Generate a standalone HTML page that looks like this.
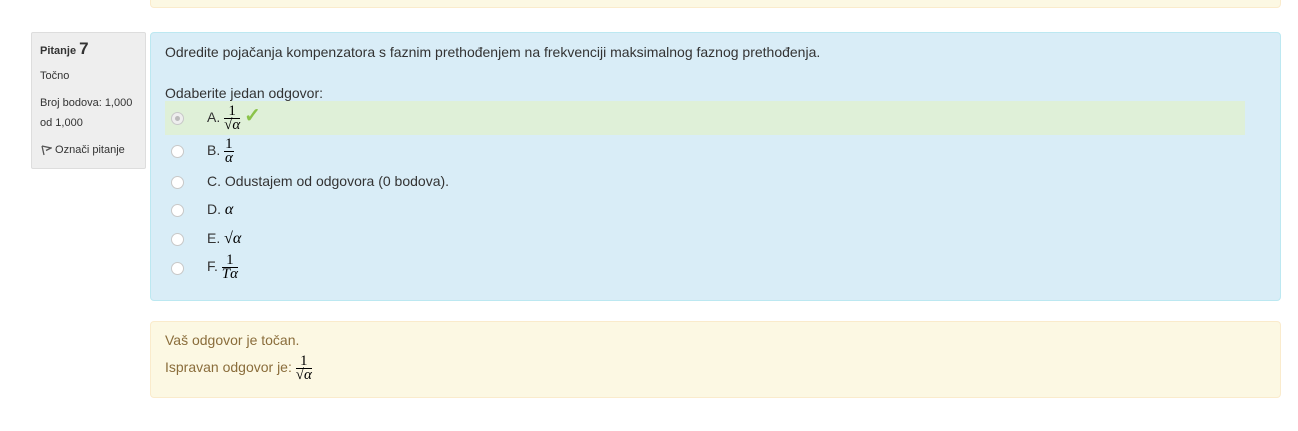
<!DOCTYPE html>
<html><head><meta charset="utf-8"><style>
body{margin:0;width:1298px;height:431px;background:#fff;font-family:"Liberation Sans",sans-serif;color:#333;position:relative;overflow:hidden}
.a{position:absolute}
.top{left:150px;top:-10px;width:1129px;height:16px;background:#fcf8e3;border:1px solid #faebcc;border-radius:4px}
.info{left:31px;top:32px;width:113px;height:135px;background:#eee;border:1px solid #ddd;border-radius:2px;font-size:11px}
.q{left:150px;top:32px;width:1129px;height:267px;background:#d9edf7;border:1px solid #bce8f1;border-radius:4px;font-size:14px}
.fb{left:150px;top:321px;width:1129px;height:75px;background:#fcf8e3;border:1px solid #faebcc;border-radius:4px;font-size:14px;color:#8a6d3b}
.rad{position:absolute;left:171px;width:11px;height:11px;border-radius:50%;background:#fff;border:1px solid #c8c8c8}
.lab{position:absolute;left:207px;font-size:14px}
.fr{display:inline-block;vertical-align:middle;text-align:center;font-family:"Liberation Serif",serif;line-height:13px;font-size:15px;color:#000}
.fr .n{display:block;border-bottom:1px solid #000;padding:0 1px}
.fr .d{display:block;font-style:italic}
i{font-family:"Liberation Serif",serif;font-size:16px;color:#000}
</style></head><body>
<div class="a top"></div>
<div class="a info">
<div class="a" style="left:8px;top:6px;font-weight:bold;font-size:11px">Pitanje <span style="font-size:17px">7</span></div>
<div class="a" style="left:8px;top:37px">Točno</div>
<div class="a" style="left:8px;top:64px">Broj bodova: 1,000</div>
<div class="a" style="left:8px;top:84px">od 1,000</div>
<div class="a" style="left:8px;top:111px"><svg width="12" height="12" viewBox="0 0 12 12" style="vertical-align:-3px"><path d="M2 2L4 11M2 2L11 4L6 6.5" fill="none" stroke="#555" stroke-width="1.3"/></svg> Označi pitanje</div>
</div>
<div class="a q">
<div class="a" style="left:14px;top:11px">Odredite pojačanja kompenzatora s faznim prethođenjem na frekvenciji maksimalnog faznog prethođenja.</div>
<div class="a" style="left:14px;top:52px">Odaberite jedan odgovor:</div>
<div class="a" style="left:14px;top:68px;width:1080px;height:34px;background:#dff0d8"></div>
</div>
<div class="rad" style="top:112px;background:#eee"><div style="margin:3px;width:5px;height:5px;border-radius:50%;background:#bbb"></div></div>
<div class="lab" style="top:103px">A. <span class="fr"><span class="n">1</span><span class="d">√α</span></span> <span style="color:#8bc34a;font-size:20px;font-weight:bold">✓</span></div>
<div class="rad" style="top:145px"></div>
<div class="lab" style="top:138px">B. <span class="fr"><span class="n">1</span><span class="d">α</span></span></div>
<div class="rad" style="top:176px"></div>
<div class="lab" style="top:173px">C. Odustajem od odgovora (0 bodova).</div>
<div class="rad" style="top:204px"></div>
<div class="lab" style="top:201px">D. <i>α</i></div>
<div class="rad" style="top:233px"></div>
<div class="lab" style="top:230px">E. <i>√α</i></div>
<div class="rad" style="top:262px"></div>
<div class="lab" style="top:254px">F. <span class="fr"><span class="n">1</span><span class="d">Tα</span></span></div>
<div class="a fb">
<div class="a" style="left:14px;top:10px">Vaš odgovor je točan.</div>
<div class="a" style="left:14px;top:33px">Ispravan odgovor je: <span class="fr"><span class="n">1</span><span class="d">√α</span></span></div>
</div>
</body></html>
